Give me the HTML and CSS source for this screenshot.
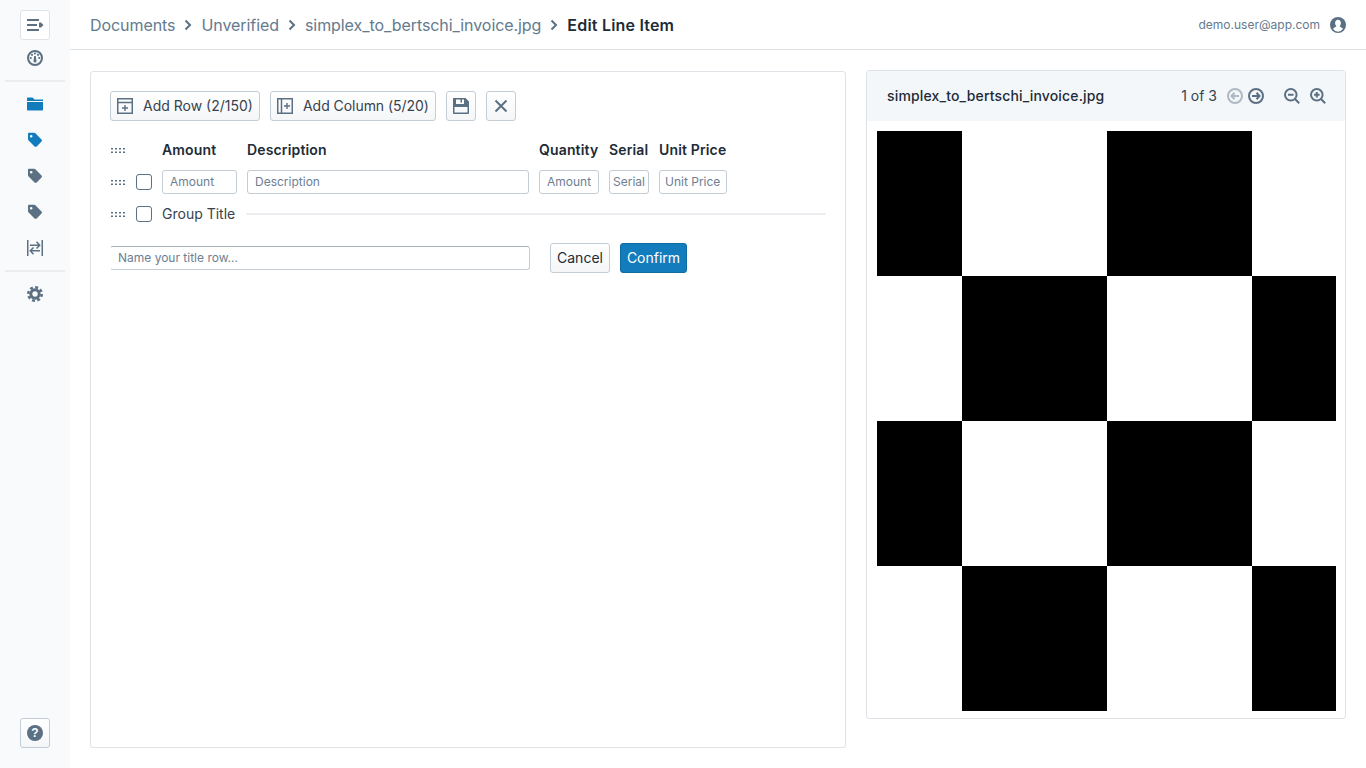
FILE: index.html
```html
<!DOCTYPE html>
<html lang="en">
<head>
    <meta charset="UTF-8">
    <meta name="viewport" content="width=device-width, initial-scale=1.0">
    <title>Edit Line Item</title>
    <link rel="stylesheet" href="styles.css">
</head>
<body>
<svg class="defs" width="0" height="0">
    <symbol id="tag" viewBox="0 0 16 16"><path fill-rule="evenodd" d="M1 1.800C1 1.200 1.400.8 2 .8h5.200c.5 0 .9.200 1.200.5l6.100 6.100c.6.600.6 1.600 0 2.200l-4.800 4.800c-.6.600-1.600.6-2.200 0L1.400 8.300C1.100 8 1 7.600 1 7.200zM4.200 3A1.300 1.300 0 1 0 4.200 5.600 1.300 1.300 0 0 0 4.200 3z"/></symbol>
    <symbol id="drag" viewBox="0 0 16 7"><path d="M1 1h2v1.500H1zM5 1h2v1.500H5zM9 1h2v1.500H9zM13 1h2v1.500h-2zM1 4.500h2V6H1zM5 4.500h2V6H5zM9 4.500h2V6H9zM13 4.500h2V6h-2z"/></symbol>
</svg>

<div class="app">
    <aside class="sidebar">
        <button class="side-btn">
            <svg width="18" height="14" viewBox="0 0 18 14"><path class="fill" d="M1 1h12v2H1zM1 6h10v2H1zM1 11h12v2H1zM13 4.500h2L17.500 7 15 9.500h-2z"/></svg>
        </button>
        <div class="side-item">
            <svg width="16" height="16" viewBox="0 0 16 16"><circle cx="8" cy="8" r="7" class="ring"/><path class="fill" d="M7.200 6h1.600L9.500 11a1.500 1.500 0 1 1-3 0z"/><circle class="fill" cx="3.800" cy="8" r="1.100"/><circle class="fill" cx="5" cy="4.800" r="1.100"/><circle class="fill" cx="8" cy="3.500" r="1.100"/><circle class="fill" cx="11" cy="4.800" r="1.100"/><circle class="fill" cx="12.200" cy="8" r="1.100"/></svg>
        </div>
        <hr class="side-rule">
        <div class="side-item active">
            <svg width="16" height="14" viewBox="0 0 16 14"><path d="M0 1.500C0 1 .4.500 1 .500h4.500L7.500 2.500H16V4H0zM0 5h16v7.500c0 .6-.4 1-1 1H1c-.6 0-1-.4-1-1z"/></svg>
        </div>
        <div class="side-item active"><svg width="16" height="16"><use href="#tag"/></svg></div>
        <div class="side-item"><svg width="16" height="16"><use href="#tag"/></svg></div>
        <div class="side-item"><svg width="16" height="16"><use href="#tag"/></svg></div>
        <div class="side-item">
            <svg width="16" height="16" viewBox="0 0 16 16"><path class="line" d="M.75 0v16M15.250 0v16M3 5.200h9.500M9.500 1.800l3.200 3.400-3.200 3.300M13 10.800H3.500M6.500 7.500 3.300 10.800l3.200 3.400"/></svg>
        </div>
        <hr class="side-rule">
        <div class="side-item">
            <svg width="16" height="16" viewBox="0 0 16 16"><circle cx="8" cy="8" r="4.200" fill="none" stroke="#5c7083" stroke-width="3"/><circle cx="8" cy="8" r="6.700" fill="none" stroke="#5c7083" stroke-width="2.600" stroke-dasharray="2.900 2.360"/></svg>
        </div>
        <button class="side-btn help">
            <svg width="16" height="16" viewBox="0 0 16 16"><circle class="fill" cx="8" cy="8" r="8"/><text class="help-mark" x="8" y="12" text-anchor="middle">?</text></svg>
        </button>
    </aside>

    <div class="main">
        <header class="topbar">
            <nav class="crumbs">
                <span>Documents</span>
                <svg class="sep" width="8" height="12" viewBox="0 0 8 12"><path d="M1.500 1.500 6 6l-4.500 4.500"/></svg>
                <span>Unverified</span>
                <svg class="sep" width="8" height="12" viewBox="0 0 8 12"><path d="M1.500 1.500 6 6l-4.500 4.500"/></svg>
                <span>simplex_to_bertschi_invoice.jpg</span>
                <svg class="sep" width="8" height="12" viewBox="0 0 8 12"><path d="M1.500 1.500 6 6l-4.500 4.500"/></svg>
                <strong>Edit Line Item</strong>
            </nav>
            <div class="user">
                <span>demo.user@app.com</span>
                <svg width="16" height="16" viewBox="0 0 16 16"><circle class="fill" cx="8" cy="8" r="8"/><path fill="#fff" d="M8 2.800c1.800 0 2.900 1.400 2.900 3.300 0 1.300-.5 2.400-1.200 3 .1.800 1 1.200 2.100 1.700.6.300 1 .6 1.200.9A6.800 6.800 0 0 1 8 14.800a6.800 6.800 0 0 1-5-3.100c.2-.3.600-.6 1.200-.9 1.100-.5 2-.9 2.100-1.700-.7-.6-1.200-1.700-1.200-3C5.100 4.200 6.200 2.800 8 2.800z"/></svg>
            </div>
        </header>

        <div class="content">
            <section class="editor">
                <div class="toolbar">
                    <button class="btn icon-text add-row">
                        <svg width="16" height="16" viewBox="0 0 16 16"><rect class="line" x=".75" y=".75" width="14.500" height="14.500"/><path class="line" d="M1 4.500h14"/><path class="fill" d="M7.300 7H8.700V9.300H11V10.700H8.700V13H7.300V10.700H5V9.300H7.300z"/></svg>
                        <span>Add Row (2/150)</span>
                    </button>
                    <button class="btn icon-text add-col">
                        <svg width="16" height="16" viewBox="0 0 16 16"><rect class="line" x=".75" y=".75" width="14.500" height="14.500"/><path class="line" d="M4.500 1v14"/><path class="fill" d="M9.300 5H10.700V7.300H13V8.700H10.700V11H9.300V8.700H7V7.300H9.300z"/></svg>
                        <span>Add Column (5/20)</span>
                    </button>
                    <button class="btn square">
                        <svg width="16" height="16" viewBox="0 0 16 16"><path fill-rule="evenodd" class="fill" d="M1 0h11.500L16 3.500V15c0 .6-.4 1-1 1H1c-.6 0-1-.4-1-1V1c0-.6.400-1 1-1zM3 1.500V6h8V1.500H9V4.500H7.500V1.500zM1.500 9v5.500h13V9z"/></svg>
                    </button>
                    <button class="btn square">
                        <svg width="14" height="14" viewBox="0 0 14 14"><path class="cross" d="M1.500 1.500l11 11M12.500 1.500l-11 11"/></svg>
                    </button>
                </div>

                <div class="item-grid">
                    <svg class="drag" width="16" height="7"><use href="#drag"/></svg>
                    <span></span>
                    <b>Amount</b>
                    <b>Description</b>
                    <b>Quantity</b>
                    <b>Serial</b>
                    <b>Unit Price</b>

                    <svg class="drag" width="16" height="7"><use href="#drag"/></svg>
                    <span class="check"></span>
                    <input placeholder="Amount">
                    <input placeholder="Description">
                    <input placeholder="Amount">
                    <input class="tight" placeholder="Serial">
                    <input class="snug" placeholder="Unit Price">
                </div>

                <div class="group-row">
                    <svg class="drag" width="16" height="7"><use href="#drag"/></svg>
                    <span class="check"></span>
                    <span class="group-label">Group Title</span>
                    <span class="group-line"></span>
                </div>

                <div class="title-row">
                    <input class="title-input" placeholder="Name your title row...">
                    <button class="btn cancel">Cancel</button>
                    <button class="btn confirm">Confirm</button>
                </div>
            </section>

            <section class="viewer">
                <div class="viewer-head">
                    <span class="file-name">simplex_to_bertschi_invoice.jpg</span>
                    <div class="pager">
                        <span class="page-count">1 of 3</span>
                        <svg class="dim" width="16" height="16" viewBox="0 0 16 16"><circle class="line" cx="8" cy="8" r="7"/><path class="line" d="M12 8H4.800M7.500 4.800 4.500 8l3 3.200"/></svg>
                        <svg class="next" width="16" height="16" viewBox="0 0 16 16"><circle class="line" cx="8" cy="8" r="7"/><path class="line" d="M4 8h7.200M8.500 4.800l3 3.200-3 3.200"/></svg>
                        <svg class="zoom-out" width="16" height="16" viewBox="0 0 16 16"><circle class="line" cx="6.800" cy="6.800" r="5.800"/><path class="line" d="M4 6.800h5.600M11 11l4.200 4.200"/></svg>
                        <svg class="zoom-in" width="16" height="16" viewBox="0 0 16 16"><circle class="line" cx="6.800" cy="6.800" r="5.800"/><path class="line" d="M4 6.800h5.600M6.800 4v5.600M11 11l4.200 4.200"/></svg>
                    </div>
                </div>
                <div class="page">
                    <div class="checker">
                        <i class="k"></i><i></i><i class="k"></i><i></i>
                        <i></i><i class="k"></i><i></i><i class="k"></i>
                        <i class="k"></i><i></i><i class="k"></i><i></i>
                        <i></i><i class="k"></i><i></i><i class="k"></i>
                    </div>
                </div>
            </section>
        </div>
    </div>
</div>
</body>
</html>
```

FILE: styles.css
```css
* {
    box-sizing: border-box;
}
html, body {
    height: 100%;
    margin: 0;
    overflow: hidden;
    font-family: Inter, "Liberation Sans", sans-serif;
    color: #212b36;
    background: #fff;
}
.defs {
    position: absolute;
}
.fill {
    fill: #5c7083;
}
.line {
    fill: none;
    stroke: #5c7083;
    stroke-width: 1.5;
}
.app {
    display: flex;
    height: 768px;
}

/* sidebar */
.sidebar {
    width: 70px;
    flex: none;
    display: flex;
    flex-direction: column;
    align-items: center;
    padding: 10px 0 20px;
    background: #f9fafc;
}
.sidebar svg {
    fill: #5c7083;
}
.side-btn {
    width: 30px;
    height: 30px;
    flex: none;
    padding: 0;
    display: flex;
    align-items: center;
    justify-content: center;
    background: #fff;
    border: 1px solid #dfe3e8;
    border-radius: 3px;
}
.side-btn.help {
    margin-top: auto;
    background: linear-gradient(#fff, #f4f6f8);
    border-color: #c4cdd5;
}
.help-mark {
    fill: #fff;
    font-size: 12px;
    font-weight: 700;
}
.side-item {
    width: 100%;
    height: 36px;
    flex: none;
    display: flex;
    align-items: center;
    justify-content: center;
}
.side-item.active svg {
    fill: #137cbd;
}
.ring {
    fill: none;
    stroke: #5c7083;
    stroke-width: 2;
}
.side-rule {
    width: 60px;
    height: 2px;
    flex: none;
    margin: 4px 0;
    border: 0;
    background: #ebedf0;
}

/* top bar */
.main {
    flex: 1;
    min-width: 0;
    display: flex;
    flex-direction: column;
}
.topbar {
    height: 50px;
    flex: none;
    display: flex;
    align-items: center;
    justify-content: space-between;
    padding: 0 20px;
    border-bottom: 1px solid #dfe3e8;
}
.crumbs {
    display: flex;
    align-items: center;
    gap: 9px;
    font-size: 16px;
    color: #647a8e;
}
.crumbs span {
    letter-spacing: -.07px;
}
.crumbs strong {
    font-weight: 600;
    letter-spacing: .2px;
    color: #212b36;
}
.sep {
    fill: none;
    stroke: #5c7083;
    stroke-width: 2;
}
.user {
    display: flex;
    align-items: center;
    gap: 10px;
    font-size: 12px;
    color: #647a8e;
}

/* panels */
.content {
    flex: 1;
    min-height: 0;
    display: flex;
    align-items: flex-start;
    gap: 20px;
    padding: 20px;
}
.editor {
    width: 756px;
    height: 677px;
    margin-top: 1px;
    padding: 19px;
    border: 1px solid #dfe3e8;
    border-radius: 3px;
}
.toolbar {
    display: flex;
    gap: 10px;
}
.btn {
    height: 30px;
    padding: 0 0 2px;
    font-family: inherit;
    font-size: 14px;
    color: #212b36;
    background: linear-gradient(#fff, #f4f6f8);
    border: 1px solid #c4cdd5;
    border-radius: 3px;
}
.icon-text {
    display: flex;
    align-items: center;
    gap: 10px;
    padding: 0 6px;
    color: #37424d;
}
.icon-text span {
    padding-bottom: 2px;
}
.add-row {
    width: 150px;
}
.add-col {
    width: 166px;
    letter-spacing: -.05px;
}
.square {
    width: 30px;
    padding: 0;
    display: flex;
    align-items: center;
    justify-content: center;
}
.cross {
    fill: none;
    stroke: #5c7083;
    stroke-width: 2;
}

/* line item table */
.item-grid {
    display: grid;
    grid-template-columns: 16px 16px 75px 282px 60px 40px 68px;
    grid-template-rows: 18px 24px;
    gap: 11px 10px;
    align-items: center;
    margin-top: 20px;
}
.item-grid b {
    padding-bottom: 2px;
    font-size: 14px;
    font-weight: 600;
    letter-spacing: .15px;
    white-space: nowrap;
}
.drag {
    fill: #5c7083;
}
.check {
    width: 16px;
    height: 16px;
    background: #fff;
    border: 1px solid #5c7083;
    border-radius: 3px;
}
input {
    width: 100%;
    height: 24px;
    padding: 0 7px 2px;
    font-family: inherit;
    font-size: 12px;
    color: #212b36;
    background: #fff;
    border: 1px solid #c4cdd5;
    border-radius: 3px;
    outline: none;
}
input::placeholder {
    color: #6d8092;
    opacity: 1;
}
input.tight {
    padding: 0 3px 2px;
}
input.snug {
    padding: 0 5px 2px;
}
.group-row {
    display: flex;
    align-items: center;
    height: 18px;
    margin-top: 11px;
}
.group-row .check {
    margin-left: 10px;
}
.group-label {
    margin-left: 10px;
    padding-bottom: 2px;
    font-size: 14px;
    white-space: nowrap;
    color: #37424d;
}
.group-line {
    flex: 1;
    height: 2px;
    margin-left: 11px;
    background: #ebedf0;
}
.title-row {
    display: flex;
    align-items: center;
    margin-top: 20px;
}
.title-input {
    width: 420px;
    border-top-color: #a9b3bc;
    border-left-color: transparent;
}
.cancel {
    width: 60px;
    margin-left: 20px;
}
.confirm {
    width: 67px;
    margin-left: 10px;
    color: #fff;
    background: #137cbd;
    border-color: #106ba3;
}

/* document viewer */
.viewer {
    width: 480px;
    height: 649px;
    border: 1px solid #dfe3e8;
    border-radius: 3px;
}
.viewer-head {
    height: 50px;
    display: flex;
    align-items: center;
    justify-content: space-between;
    padding: 0 19px 0 20px;
    background: #f4f7fa;
}
.file-name {
    padding-bottom: 2px;
    font-size: 14px;
    font-weight: 500;
    letter-spacing: .16px;
}
.pager {
    display: flex;
    align-items: center;
}
.page-count {
    margin-right: 10px;
    padding-bottom: 1px;
    font-size: 14px;
    color: #37424d;
}
.pager .line {
    stroke-width: 2;
}
.dim {
    opacity: .45;
}
.next {
    margin-left: 5px;
}
.zoom-out {
    margin-left: 20px;
}
.zoom-in {
    margin-left: 10px;
}
.page {
    padding: 10px 9px 7px 10px;
}
.checker {
    display: grid;
    grid-template-columns: 85px 145px 145px 84px;
    grid-template-rows: repeat(4, 145px);
}
.checker .k {
    background: #000;
}
```
